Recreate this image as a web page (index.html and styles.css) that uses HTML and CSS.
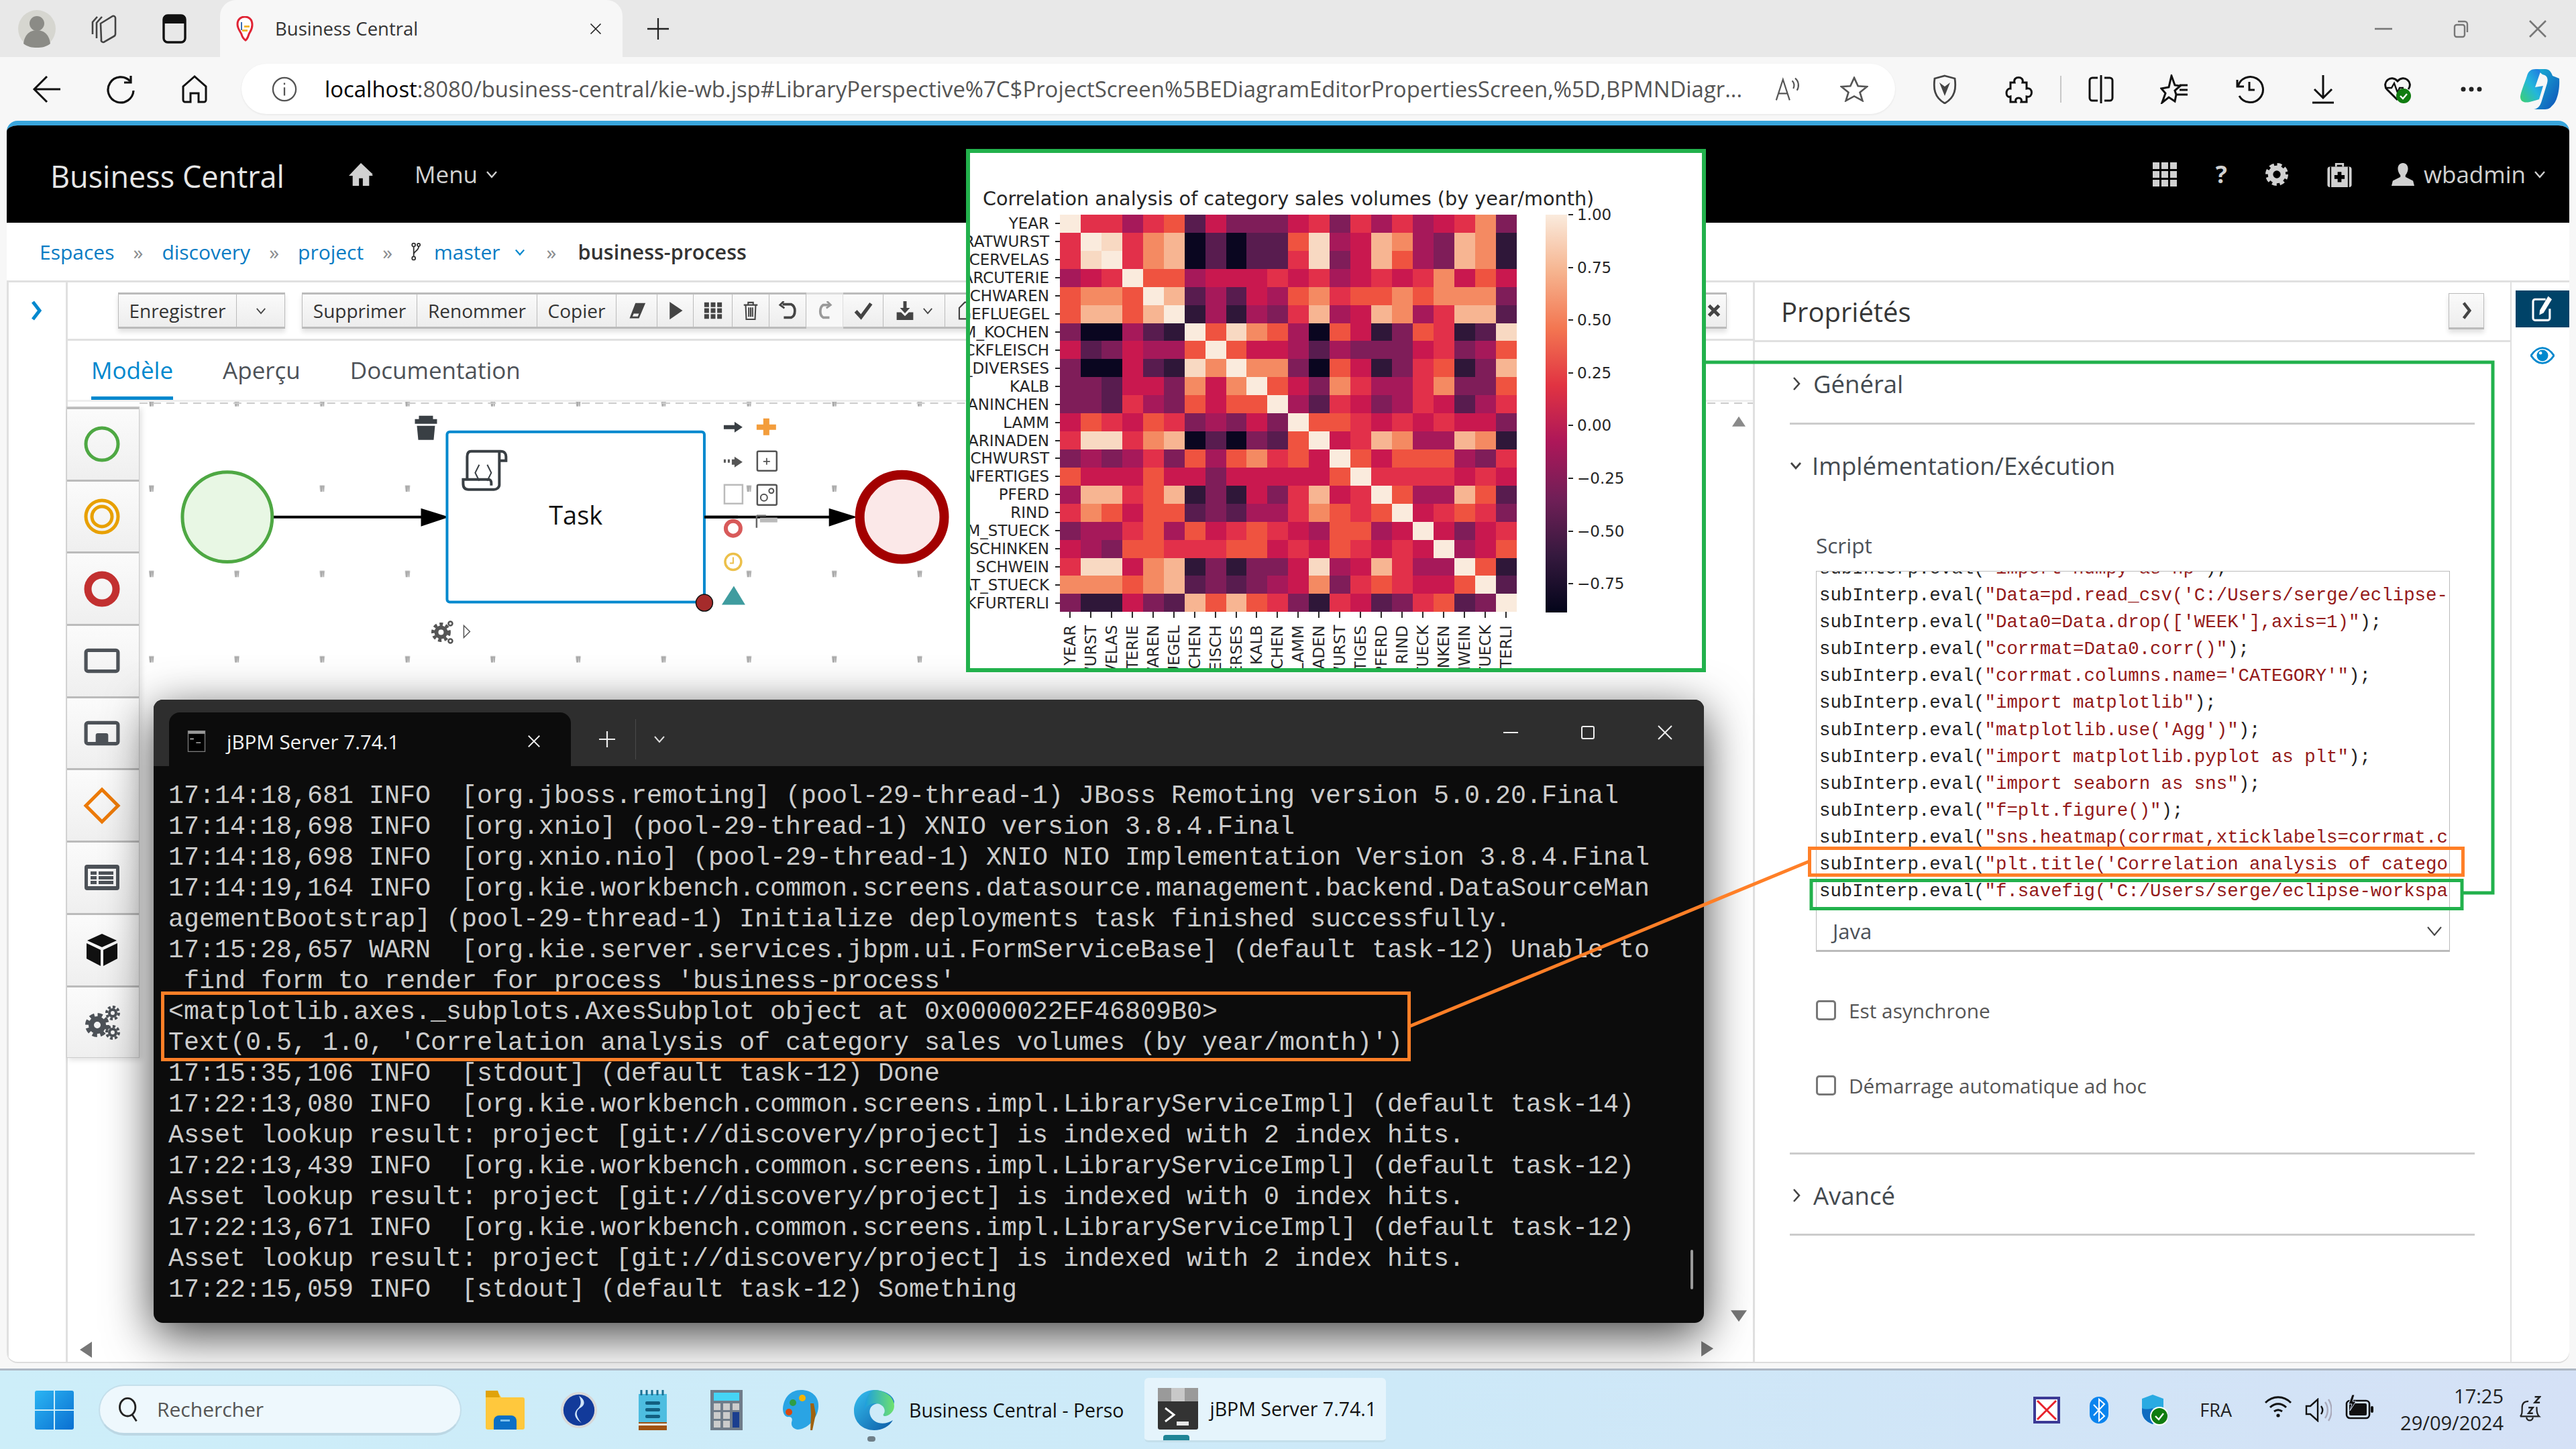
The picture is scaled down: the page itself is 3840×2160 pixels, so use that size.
FILE: index.html
```html
<!DOCTYPE html>
<html lang="fr">
<head>
  <meta charset="UTF-8">
  <title>Business Central</title>
  <link rel="stylesheet" href="styles.css">
</head>
<body>
<div class="screen">

  <!-- Browser tabs -->
  <div class="tabstrip">
    <svg class="profile" viewBox="0 0 56 56"><circle cx="28" cy="28" r="28" fill="#d6d6d0"/><circle cx="28" cy="20" r="11" fill="#8b8b86"/><path d="M8 50c2-16 12-20 20-20s18 4 20 20c-6 5-13 6-20 6s-14-1-20-6z" fill="#8b8b86"/></svg>
    <svg class="strip-icon" viewBox="0 0 40 44" fill="none" stroke="#444" stroke-width="2.6"><path d="M3 30V12l7-8M9 36V13l8-9"/><path d="M15 14l18-11a3 3 0 0 1 4 3v24a4 4 0 0 1-2 3L21 41a3 3 0 0 1-5-3z"/></svg>
    <svg class="strip-icon" viewBox="0 0 40 44"><rect x="4" y="2" width="32" height="40" rx="6" fill="none" stroke="#111" stroke-width="3.4"/><path d="M4 8a6 6 0 0 1 6-6h20a6 6 0 0 1 6 6v6H4z" fill="#111"/></svg>
    <div class="tab-active">
      <svg class="favicon" viewBox="0 0 30 38"><path d="M4 12C4 4 10 1 15 1s11 3 11 12c0 7-3 10-5 14-1 3-2 7-5 9-3-2-5-5-6-9-2-5-6-8-6-15z" fill="#fff" stroke="#e02434" stroke-width="3"/><rect x="14" y="14" width="8" height="3" fill="#f2b632"/><rect x="11" y="20" width="8" height="3" fill="#f2b632"/><rect x="9" y="9" width="2" height="12" fill="#3b6fb5"/></svg>
      <span class="tab-title">Business Central</span>
      <svg class="tab-x" viewBox="0 0 24 24" stroke="#222" stroke-width="2"><path d="M3 3l18 18M21 3L3 21"/></svg>
    </div>
    <svg class="tab-plus" viewBox="0 0 36 36" stroke="#222" stroke-width="2.4"><path d="M18 1v34M1 18h34"/></svg>
    <div class="win-controls">
      <svg viewBox="0 0 30 30" stroke="#777" stroke-width="2.6"><path d="M2 15h26"/></svg>
      <svg viewBox="0 0 30 30" fill="none" stroke="#777" stroke-width="2.4"><rect x="6" y="9" width="15" height="18" rx="3"/><path d="M11 4h10a4 4 0 0 1 4 4v12"/></svg>
      <svg viewBox="0 0 30 30" stroke="#777" stroke-width="2.6"><path d="M3 3l24 24M27 3L3 27"/></svg>
    </div>
  </div>

  <!-- Browser toolbar -->
  <div class="browserbar">
    <div class="nav-btn"><svg viewBox="0 0 44 44" fill="none" stroke="#111" stroke-width="3"><path d="M42 22H3M22 3L3 22l19 19"/></svg></div>
    <div class="nav-btn"><svg viewBox="0 0 44 44" fill="none" stroke="#111" stroke-width="3.2"><path d="M36 10A19 19 0 1 0 41 24"/><path d="M37 2v10H27"/></svg></div>
    <div class="nav-btn"><svg viewBox="0 0 44 44" fill="none" stroke="#111" stroke-width="3"><path d="M22 3L5 18v20a3 3 0 0 0 3 3h8V28h12v13h8a3 3 0 0 0 3-3V18z"/></svg></div>
    <div class="address">
      <svg class="addr-info" viewBox="0 0 40 40" fill="none" stroke="#555" stroke-width="2.4"><circle cx="20" cy="20" r="18"/><path d="M20 17v13M20 10v3"/></svg>
      <span class="url"><b>localhost</b>:8080/business-central/kie-wb.jsp#LibraryPerspective%7C$ProjectScreen%5BEDiagramEditorPropertiesScreen,%5D,BPMNDiagr...</span>
      <svg class="addr-read" viewBox="0 0 44 40" fill="none" stroke="#555" stroke-width="2.4"><path d="M2 38L13 4l11 34M6 27h14M28 6c4 3 4 9 2 13M33 2c6 5 7 13 3 20"/></svg>
      <svg class="addr-star" viewBox="0 0 44 40" fill="none" stroke="#555" stroke-width="2.8"><path d="M22 2l6 13 14 1-11 9 4 13-13-7-13 7 4-13L2 16l14-1z"/></svg>
    </div>
    <div class="ext-icons">
      <svg viewBox="0 0 44 44" fill="none" stroke="#444" stroke-width="2.8"><path d="M22 2l15 4c2 14 1 28-15 37C6 34 5 20 7 6z"/><path d="M14 12l8 20 8-20-8 6z" fill="#444" stroke="none"/></svg>
      <svg viewBox="0 0 44 44" fill="none" stroke="#111" stroke-width="3"><path d="M10 12h6c-3-10 15-10 12 0h6v9c10-3 10 15 0 12v8h-8c3-8-11-8-8 0h-8v-8c-8 3-8-13 0-12z"/></svg>
      <i class="ext-sep"></i>
      <svg viewBox="0 0 44 44" fill="none" stroke="#111" stroke-width="3"><path d="M17 5H9a4 4 0 0 0-4 4v26a4 4 0 0 0 4 4h8M27 5h8a4 4 0 0 1 4 4v26a4 4 0 0 1-4 4h-8M22 1v42"/></svg>
      <svg viewBox="0 0 44 44" fill="none" stroke="#111" stroke-width="3"><path d="M17 2l5 14 8 1-8 7 2 6-2 10-9-6-10 8 5-14-6-7 11-2z"/><path d="M29 20h12M29 27h12M25 34h16" transform="translate(0 -4)"/></svg>
      <svg viewBox="0 0 44 44" fill="none" stroke="#111" stroke-width="3"><path d="M4 8v10h10"/><path d="M5 18a19 19 0 1 1 2 14"/><path d="M22 11v12h8"/></svg>
      <svg viewBox="0 0 44 44" fill="none" stroke="#111" stroke-width="3"><path d="M22 1v34M9 22l13 13 13-13M6 42h32"/></svg>
      <svg viewBox="0 0 44 44"><path d="M22 38L6 22C-2 12 12-1 22 10 32-1 46 12 38 22" fill="none" stroke="#111" stroke-width="3"/><path d="M3 20h10l4-7 5 14 3-7h6" fill="none" stroke="#111" stroke-width="2.4"/><circle cx="31" cy="32" r="11" fill="#107c10"/><path d="M26 32l4 4 6-7" fill="none" stroke="#fff" stroke-width="2.4"/></svg>
      <svg viewBox="0 0 44 44" fill="#222"><circle cx="10" cy="22" r="3.5"/><circle cx="22" cy="22" r="3.5"/><circle cx="34" cy="22" r="3.5"/></svg>
      <svg class="copilot" viewBox="0 0 60 62"><defs><linearGradient id="cpA" x1="0" y1="0" x2="1" y2="1"><stop offset="0" stop-color="#1bb6d6"/><stop offset="1" stop-color="#0f4fb8"/></linearGradient><linearGradient id="cpB" x1="0" y1="1" x2="1" y2="0"><stop offset="0" stop-color="#3fd06f"/><stop offset=".5" stop-color="#23b6dc"/><stop offset="1" stop-color="#1f6fe0"/></linearGradient></defs><path d="M24 1h14c6 0 9 4 11 10l10 4c1 14-2 34-11 41-3 4-6 5-12 5H21c7-1 10-6 12-13l8-26c2-8-1-12-7-13z" fill="url(#cpA)"/><path d="M24 1c-7 0-11 3-13 10C6 26 2 34 1 42c0 7 5 10 14 8 5-1 10-3 14-4l6-20-12 2 8-23c0-2-2-4-7-4z" fill="url(#cpB)"/></svg>
    </div>
  </div>

  <!-- Business Central -->
  <div class="app">
    <header class="topnav">
      <span class="brand">Business Central</span>
      <svg class="nav-home" viewBox="0 0 38 36" fill="#d1d1d1"><path d="M19 0l14 18h5L19 0zM19 0L0 20h6v16h10V24h6v12h10V20h6z"/></svg>
      <span class="nav-menu">Menu<svg class="caret" viewBox="0 0 18 12" fill="none" stroke="currentColor" stroke-width="2.4"><path d="M2 2l7 8 7-8"/></svg></span>
      <div class="nav-right">
        <svg class="ni-grid" viewBox="0 0 36 36" fill="#d1d1d1"><rect width="10" height="10"/><rect x="13" width="10" height="10"/><rect x="26" width="10" height="10"/><rect y="13" width="10" height="10"/><rect x="13" y="13" width="10" height="10"/><rect x="26" y="13" width="10" height="10"/><rect y="26" width="10" height="10"/><rect x="13" y="26" width="10" height="10"/><rect x="26" y="26" width="10" height="10"/></svg>
        <span class="ni-help">?</span>
        <svg class="ni-gear" viewBox="0 0 36 36" fill="none" stroke="#d1d1d1"><circle cx="18" cy="18" r="10" stroke-width="8"/><circle cx="18" cy="18" r="15" stroke-width="6" stroke-dasharray="7 4.8"/></svg>
        <svg class="ni-case" viewBox="0 0 38 40" fill="#d1d1d1"><path d="M12 8V2h14v6h-3V5h-8v3z"/><rect y="8" width="38" height="32" rx="4"/><path d="M5 8v32M33 8v32" stroke="#000" stroke-width="2"/><path d="M16 16h6v5h5v6h-5v5h-6v-5h-5v-6h5z" fill="#000"/></svg>
        <svg class="ni-user" viewBox="0 0 36 36" fill="#d1d1d1"><path d="M18 0c5 0 8 4 8 9 0 4-2 8-4 10v3l12 6 2 8H0l2-8 12-6v-3c-2-2-4-6-4-10 0-5 3-9 8-9z"/></svg>
        <span class="nav-user">wbadmin<svg class="caret" viewBox="0 0 18 12" fill="none" stroke="currentColor" stroke-width="2.4"><path d="M2 2l7 8 7-8"/></svg></span>
      </div>
    </header>

    <nav class="crumbs">
      <a>Espaces</a><span class="sep">»</span>
      <a>discovery</a><span class="sep">»</span>
      <a>project</a><span class="sep">»</span>
      <svg class="branch" viewBox="0 0 16 34" fill="none" stroke="#333" stroke-width="2.2"><circle cx="4" cy="5" r="3"/><circle cx="13" cy="5" r="2.6"/><circle cx="4" cy="29" r="3"/><path d="M4 8v18M13 8c0 8-9 8-9 14"/></svg>
      <a class="crumb-branch">master</a>
      <svg class="caret crumb-caret" viewBox="0 0 18 12" fill="none" stroke="#0088ce" stroke-width="2.4"><path d="M2 2l7 8 7-8"/></svg>
      <span class="sep">»</span>
      <strong>business-process</strong>
    </nav>

    <div class="workbench">
      <aside class="rail">
        <svg viewBox="0 0 16 30" fill="none" stroke="#0088ce" stroke-width="5"><path d="M3 2l10 13L3 28"/></svg>
      </aside>

      <main class="editor">
        <div class="toolbar">
          <div class="btn-group">
            <button class="btn w-save">Enregistrer</button>
            <button class="btn w-drop"><svg class="caret" viewBox="0 0 18 12" fill="none" stroke="#444" stroke-width="2"><path d="M2 2l7 8 7-8"/></svg></button>
          </div>
          <div class="btn-group">
            <button class="btn w-del">Supprimer</button>
            <button class="btn w-ren">Renommer</button>
            <button class="btn w-copy">Copier</button>
            <button class="btn w-ico"><svg viewBox="0 0 32 28" fill="#444"><path d="M14 1h17l-11 26H4l3-8h4l-2 5h9l2-5H7z"/></svg></button>
            <button class="btn w-play"><svg viewBox="0 0 32 32" fill="#444"><path d="M6 1l22 15L6 31z"/></svg></button>
            <button class="btn w-ico2"><svg viewBox="0 0 32 28" fill="#444"><rect x="1" width="8" height="8"/><rect x="12" width="8" height="8"/><rect x="23" width="8" height="8"/><rect x="1" y="10" width="8" height="8"/><rect x="12" y="10" width="8" height="8"/><rect x="23" y="10" width="8" height="8"/><rect x="1" y="20" width="8" height="8"/><rect x="12" y="20" width="8" height="8"/><rect x="23" y="20" width="8" height="8"/></svg></button>
            <button class="btn w-ico3"><svg viewBox="0 0 24 30" fill="none" stroke="#444" stroke-width="2.2"><path d="M1 6h22M8 6V2h8v4M4 6l1 23h14l1-23M9 10v15M12 10v15M15 10v15"/></svg></button>
            <button class="btn w-ico3"><svg viewBox="0 0 28 30" fill="none" stroke="#444" stroke-width="4"><path d="M6 5l14 0a8 11 0 0 1 0 21H8"/><path d="M8 0L2 6l7 5" stroke-width="3"/></svg></button>
            <button class="btn w-ico3 is-off"><svg viewBox="0 0 28 30" fill="none" stroke="#999" stroke-width="4"><path d="M22 6H12a8 11 0 0 0 0 20h10"/><path d="M18 0l6 6-7 5" stroke-width="3"/></svg></button>
            <button class="btn w-check"><svg viewBox="0 0 32 28" fill="none" stroke="#444" stroke-width="6"><path d="M3 15l9 10L29 2"/></svg></button>
            <button class="btn w-deploy"><svg viewBox="0 0 30 34" fill="#444"><path d="M12 0h6v12h6l-9 10-9-10h6z"/><path d="M0 20h8l7 7 7-7h8v14H0z"/></svg><svg class="caret" viewBox="0 0 18 12" fill="none" stroke="#444" stroke-width="2"><path d="M2 2l7 8 7-8"/></svg></button>
            <button class="btn w-doc"><svg viewBox="0 0 26 34" fill="none" stroke="#444" stroke-width="2.6"><path d="M2 12L12 2h12v30H2z"/></svg></button>
          </div>
          <button class="btn w-close"><svg viewBox="0 0 24 24" stroke="#444" stroke-width="6"><path d="M3 3l18 18M21 3L3 21"/></svg></button>
        </div>

        <div class="tabs">
          <span class="tab is-active">Modèle</span>
          <span class="tab">Aperçu</span>
          <span class="tab">Documentation</span>
        </div>

        <div class="canvas-wrap">
          <div class="palette">
            <div class="pal-item"><svg viewBox="0 0 56 56" fill="none" stroke="#4ea843" stroke-width="5"><circle cx="28" cy="28" r="24"/></svg></div>
            <div class="pal-item"><svg viewBox="0 0 56 56" fill="none" stroke="#e8a000" stroke-width="5"><circle cx="28" cy="28" r="24"/><circle cx="28" cy="28" r="15"/></svg></div>
            <div class="pal-item"><svg viewBox="0 0 56 56" fill="none" stroke="#c23030" stroke-width="11"><circle cx="28" cy="28" r="21"/></svg></div>
            <div class="pal-item"><svg class="pal-wide" viewBox="0 0 52 36" fill="none" stroke="#4d5258" stroke-width="5"><rect x="3" y="3" width="46" height="30" rx="3"/></svg></div>
            <div class="pal-item"><svg class="pal-wide" viewBox="0 0 52 36"><rect x="3" y="3" width="46" height="30" rx="3" fill="none" stroke="#4d5258" stroke-width="5"/><rect x="17" y="18" width="18" height="15" rx="3" fill="#4d5258"/></svg></div>
            <div class="pal-item"><svg viewBox="0 0 56 56" fill="none" stroke="#ec7a08" stroke-width="5"><path d="M28 4l24 24-24 24L4 28z"/></svg></div>
            <div class="pal-item"><svg class="pal-wide" viewBox="0 0 52 38" fill="#4d5258"><path d="M4 0h44a4 4 0 0 1 4 4v30a4 4 0 0 1-4 4H4a4 4 0 0 1-4-4V4a4 4 0 0 1 4-4zm1 6v26h42V6z" fill-rule="evenodd"/><rect x="9" y="10" width="9" height="5"/><rect x="21" y="10" width="22" height="5"/><rect x="9" y="17" width="9" height="5"/><rect x="21" y="17" width="22" height="5"/><rect x="9" y="24" width="9" height="5"/><rect x="21" y="24" width="22" height="5"/></svg></div>
            <div class="pal-item"><svg viewBox="0 0 56 56" fill="#111"><path d="M28 4l22 10-22 10L6 14z"/><path d="M5 18l21 10v24L5 41z"/><path d="M51 18L30 28v24l21-11z"/></svg></div>
            <div class="pal-item"><svg viewBox="0 0 56 56" fill="none" stroke="#4d5258"><circle cx="21" cy="32" r="9" stroke-width="8"/><circle cx="21" cy="32" r="15" stroke-width="6" stroke-dasharray="7 4.8"/><circle cx="44" cy="14" r="5" stroke-width="4"/><circle cx="44" cy="14" r="9" stroke-width="4" stroke-dasharray="4 3"/><circle cx="44" cy="43" r="5" stroke-width="4"/><circle cx="44" cy="43" r="9" stroke-width="4" stroke-dasharray="4 3"/></svg></div>
          </div>

          <svg class="diagram" viewBox="207 599 2408 1431">
            <defs>
              <pattern id="grid" x="226" y="600" width="127.4" height="127.4" patternUnits="userSpaceOnUse">
                <path d="M0 0h5l-1 9h-3z" fill="#aaa" transform="translate(-2.5 -4)"/>
                <path d="M125 0h5l-1 9h-3z" fill="#aaa" transform="translate(-2.5 -4)"/>
                <path d="M0 127h5l-1 9h-3z" fill="#aaa" transform="translate(-2.5 -4)"/>
                <path d="M125 127h5l-1 9h-3z" fill="#aaa" transform="translate(-2.5 -4)"/>
              </pattern>
            </defs>
            <rect x="207" y="596" width="2408" height="440" fill="url(#grid)"/>
            <path d="M207 600H2615" stroke="#ccc" stroke-width="2" stroke-dasharray="12 8"/>

            <line x1="406" y1="770" x2="630" y2="770" stroke="#000" stroke-width="4"/>
            <path d="M627 757l42 13-42 14z" fill="#000"/>
            <line x1="1050" y1="770" x2="1240" y2="770" stroke="#000" stroke-width="4"/>
            <path d="M1236 757l42 13-42 14z" fill="#000"/>

            <circle cx="338" cy="770" r="67" fill="#e8f7e4" stroke="#4ea843" stroke-width="5"/>
            <rect x="666" y="643" width="384" height="254" rx="4" fill="#fff" stroke="#0088ce" stroke-width="4"/>
            <text x="858" y="781" class="task-label">Task</text>
            <circle cx="1345" cy="770" r="63" fill="#fbe8e8" stroke="#a30000" stroke-width="14"/>
            <line x1="1050" y1="770" x2="1100" y2="770" stroke="#000" stroke-width="4"/>

            <g fill="none" stroke="#393f44" stroke-width="4">
              <path d="M702 672h44c6 0 8 4 8 8v6h-10M702 672c-4 0-6 3-6 8v34M744 674v48c0 4-4 7-8 7h-38c-6 0-8-4-8-9v-6h38c2 0 4 2 4 5v4"/>
              <path d="M714 692l-6 12 6 12M726 692l6 12-6 12" stroke-width="2"/>
            </g>
            <path d="M624 619h21v5h6v7h-33v-7h6zM621 634h27l-2 21h-23z" fill="#393f44"/>

            <path d="M1079 633h16v-5l12 8-12 8v-5h-16z" fill="#393f44"/>
            <path d="M1138 623h9v9h10v8h-10v8h-9v-8h-10v-8h10z" fill="#f39d3c"/>
            <path d="M1079 684h3v5h-3zM1085 684h3v5h-3zM1091 684h4v-4l12 8-12 8v-4h-4z" fill="#555"/>
            <rect x="1129" y="672" width="29" height="29" rx="2" fill="#fff" stroke="#555" stroke-width="2.5"/>
            <path d="M1143 682v10M1138 687h10" stroke="#555" stroke-width="1.8"/>
            <rect x="1080" y="722" width="27" height="28" fill="#fff" stroke="#bbb" stroke-width="2.5"/>
            <rect x="1129" y="722" width="29" height="30" rx="2" fill="#fff" stroke="#555" stroke-width="2.5"/>
            <circle cx="1139" cy="741" r="5" fill="none" stroke="#555" stroke-width="2"/><circle cx="1150" cy="731" r="3.5" fill="none" stroke="#555" stroke-width="2"/>
            <path d="M1128 786v-18M1128 768h14" stroke="#666" stroke-width="2.5" fill="none"/>
            <rect x="1133" y="771" width="26" height="7" fill="#bbb"/>
            <circle cx="1093" cy="787" r="11" fill="#fff" stroke="#d85a5a" stroke-width="6"/>
            <circle cx="1093" cy="837" r="12" fill="#fff" stroke="#ecc04a" stroke-width="3.5"/>
            <path d="M1093 830v9h-5" fill="none" stroke="#ecc04a" stroke-width="2"/>
            <path d="M1094 873l17 28h-35z" fill="#3f9c9f"/>
            <circle cx="1050" cy="898" r="12.5" fill="#a52b2b" stroke="#111" stroke-width="1.5"/>

            <g fill="none" stroke="#555">
              <circle cx="657" cy="942" r="7" stroke-width="6"/><circle cx="657" cy="942" r="12" stroke-width="5" stroke-dasharray="5 4"/>
              <circle cx="671" cy="929" r="3" stroke-width="2.5"/><circle cx="671" cy="955" r="3" stroke-width="2.5"/>
            </g>
            <path d="M691 932l9 9-9 9z" fill="#fff" stroke="#555" stroke-width="1.5"/>

            <path d="M2594 620l10 15h-20z" fill="#8a8a8a"/>
            <path d="M2582 1954h24l-12 17z" fill="#777"/>
            <path d="M2538 2000l18 11-18 12z" fill="#777"/>
          </svg>
          <svg class="scroll-left" viewBox="0 0 18 24"><path d="M18 0v24L0 12z" fill="#777"/></svg>
        </div>
      </main>

      <section class="props">
        <div class="props-head">
          <h2>Propriétés</h2>
          <button class="props-toggle"><svg viewBox="0 0 16 30" fill="none" stroke="#444" stroke-width="5"><path d="M3 2l10 13L3 28"/></svg></button>
        </div>
        <div class="props-body">
          <div class="acc acc-general">
            <svg class="chev" viewBox="0 0 12 22" fill="none" stroke="#444" stroke-width="2.6"><path d="M2 2l8 9-8 9"/></svg>Général
          </div>
          <div class="acc acc-impl">
            <svg class="chev-down" viewBox="0 0 18 12" fill="none" stroke="#444" stroke-width="2.8"><path d="M2 2l7 8 7-8"/></svg>Implémentation/Exécution
          </div>
          <div class="script-form">
            <label class="form-label">Script</label>
            <div class="code-editor">
<div class="code"><div class="code-line">subInterp.eval(<em>"import numpy as np"</em>);</div>
<div class="code-line">subInterp.eval(<em>"Data=pd.read_csv('C:/Users/serge/eclipse-</em></div>
<div class="code-line">subInterp.eval(<em>"Data0=Data.drop(['WEEK'],axis=1)"</em>);</div>
<div class="code-line">subInterp.eval(<em>"corrmat=Data0.corr()"</em>);</div>
<div class="code-line">subInterp.eval(<em>"corrmat.columns.name='CATEGORY'"</em>);</div>
<div class="code-line">subInterp.eval(<em>"import matplotlib"</em>);</div>
<div class="code-line">subInterp.eval(<em>"matplotlib.use('Agg')"</em>);</div>
<div class="code-line">subInterp.eval(<em>"import matplotlib.pyplot as plt"</em>);</div>
<div class="code-line">subInterp.eval(<em>"import seaborn as sns"</em>);</div>
<div class="code-line">subInterp.eval(<em>"f=plt.figure()"</em>);</div>
<div class="code-line">subInterp.eval(<em>"sns.heatmap(corrmat,xticklabels=corrmat.c</em></div>
<div class="code-line">subInterp.eval(<em>"plt.title('Correlation analysis of catego</em></div>
<div class="code-line">subInterp.eval(<em>"f.savefig('C:/Users/serge/eclipse-workspa</em></div></div>
              <div class="lang-select">Java<svg viewBox="0 0 22 14" fill="none" stroke="#444" stroke-width="2"><path d="M1 1l10 12L21 1"/></svg></div>
            </div>
            <label class="check"><i></i>Est asynchrone</label>
            <label class="check"><i></i>Démarrage automatique ad hoc</label>
          </div>
          <div class="acc acc-adv">
            <svg class="chev" viewBox="0 0 12 22" fill="none" stroke="#444" stroke-width="2.6"><path d="M2 2l8 9-8 9"/></svg>Avancé
          </div>
        </div>
      </section>

      <aside class="dock">
        <button class="dock-btn"><svg viewBox="0 0 40 54" fill="none" stroke="#fff" stroke-width="4"><path d="M26 8H6a4 4 0 0 0-4 4v32a4 4 0 0 0 4 4h24a4 4 0 0 0 4-4V26"/><path d="M31 2l7 6-16 26-8 4 1-9z" fill="#fff" stroke="none"/></svg></button>
        <svg class="dock-eye" viewBox="0 0 38 26" fill="none" stroke="#0088ce" stroke-width="3"><path d="M1 13C7 4 13 1 19 1s12 3 18 12c-6 9-12 12-18 12S7 22 1 13z"/><circle cx="19" cy="13" r="9" fill="#0088ce" stroke="none"/><circle cx="16" cy="9" r="2.4" fill="#fff" stroke="none"/></svg>
      </aside>
    </div>
  </div>

  <!-- Windows taskbar -->
  <div class="taskbar">
    <svg class="start" viewBox="0 0 58 58"><defs><linearGradient id="winG" x1="0" y1="0" x2="1" y2="1"><stop offset="0" stop-color="#2bb5f3"/><stop offset="1" stop-color="#0a6fd1"/></linearGradient></defs><path d="M0 3a3 3 0 0 1 3-3h25v28H0zM30 0h25a3 3 0 0 1 3 3v25H30zM0 30h28v28H3a3 3 0 0 1-3-3zM30 30h28v25a3 3 0 0 1-3 3H30z" fill="url(#winG)"/></svg>
    <div class="search"><svg viewBox="0 0 36 44" fill="none" stroke="#222" stroke-width="3.4"><ellipse cx="17" cy="18" rx="14" ry="16"/><path d="M25 31l8 12"/></svg>Rechercher</div>
    <svg class="app-icon a-folder" viewBox="0 0 58 60"><path d="M0 4a3 3 0 0 1 3-3h14l6 10h32a3 3 0 0 1 3 3v42a3 3 0 0 1-3 3H3a3 3 0 0 1-3-3z" fill="#ffc83d"/><path d="M0 1h18l3 10H0z" fill="#e0a30a"/><path d="M12 46a8 8 0 0 1 8-8h18a8 8 0 0 1 8 8v13H12z" fill="#0b6fc6"/><rect x="22" y="44" width="14" height="3" fill="#7cc0ee"/></svg>
    <svg class="app-icon a-disc" viewBox="0 0 58 60"><circle cx="29" cy="30" r="28" fill="#d8d8d8"/><circle cx="29" cy="30" r="24" fill="#123a9a"/><path d="M29 8c10 6 10 14 3 18s-10 10 1 24C21 42 21 34 27 28s6-12 2-20z" fill="#cfe3f7"/></svg>
    <svg class="app-icon a-notes" viewBox="0 0 44 60"><rect x="1" y="6" width="42" height="48" fill="#4dbde0"/><rect x="1" y="48" width="42" height="12" fill="#a05311"/><rect x="1" y="50" width="42" height="3" fill="#e8e8e8"/><path d="M5 0v8M13 0v8M21 0v8M29 0v8M37 0v8" stroke="#1a6f93" stroke-width="3"/><rect x="11" y="17" width="22" height="5" rx="2" fill="#125f80"/><rect x="11" y="27" width="22" height="5" rx="2" fill="#125f80"/><rect x="11" y="37" width="22" height="5" rx="2" fill="#125f80"/></svg>
    <svg class="app-icon a-calc" viewBox="0 0 48 60"><rect width="48" height="60" fill="#6f7c8a"/><rect x="5" y="4" width="38" height="12" fill="#45d4f5"/><rect x="5" y="20" width="10" height="10" fill="#ccc"/><rect x="19" y="20" width="10" height="10" fill="#ccc"/><rect x="33" y="20" width="10" height="10" fill="#ccc"/><rect x="5" y="33" width="10" height="10" fill="#ccc"/><rect x="19" y="33" width="10" height="10" fill="#ccc"/><rect x="5" y="46" width="10" height="10" fill="#ccc"/><rect x="19" y="46" width="10" height="10" fill="#ccc"/><rect x="33" y="33" width="10" height="23" fill="#1b3f8f"/></svg>
    <svg class="app-icon a-paint" viewBox="0 0 58 60"><path d="M28 0C12 0 2 12 1 28c0 8 4 13 9 12 4 0 6 3 4 8-1 5 2 10 9 11 13 0 30-15 31-34C55 10 44 0 28 0z" fill="#2aa4e4"/><circle cx="30" cy="12" r="5" fill="#f4b400"/><circle cx="16" cy="19" r="5" fill="#2f9e44"/><circle cx="10" cy="33" r="5" fill="#d9480f"/><path d="M42 20l5 0 3 16-5 24h-3l1-24z" fill="#a0620f"/></svg>
    <div class="edge-wrap">
      <svg class="app-icon a-edge" viewBox="0 0 60 60"><defs><linearGradient id="edgeA" x1="0" y1="0" x2="1" y2="1"><stop offset="0" stop-color="#35c1f1"/><stop offset="1" stop-color="#0c59a4"/></linearGradient><linearGradient id="edgeB" x1="0" y1="0" x2="1" y2="0"><stop offset="0" stop-color="#1b9de2"/><stop offset="1" stop-color="#6fe26b"/></linearGradient></defs><path d="M30 0C13 0 0 14 0 31c0 17 13 29 30 29 12 0 23-6 28-15-12 8-30 6-34-8-3-12 6-17 14-17 7 0 12 4 12 9 4-2 10-6 10-12C58 7 44 0 30 0z" fill="url(#edgeA)"/><path d="M30 0C44 0 60 9 60 24c0 9-9 15-14 15-2 0-3-1-2-3 3-3 3-11-6-15-9-3-20 1-23 10C17 12 22 2 30 0z" fill="url(#edgeB)"/></svg>
      <i class="edge-dot"></i>
    </div>
    <span class="task-label-text t-edge">Business Central - Perso</span>
    <div class="task-active">
      <svg viewBox="0 0 60 62"><rect width="60" height="62" rx="3" fill="#333"/><rect width="60" height="20" fill="#9a9a9a"/><rect x="20" width="20" height="20" fill="#c8c8c8"/><path d="M11 30l13 10-13 10" fill="none" stroke="#fff" stroke-width="3"/><rect x="28" y="50" width="18" height="6" fill="#e6e6e6"/></svg>
      <span class="task-label-text">jBPM Server 7.74.1</span>
      <i class="task-underline"></i>
    </div>
    <div class="tray">
      <svg class="t-x" viewBox="0 0 40 40"><rect x="2" y="2" width="36" height="36" fill="#fff" stroke="#3c3a96" stroke-width="4"/><path d="M6 6l28 28M34 6L6 34" stroke="#e8212b" stroke-width="3"/></svg>
      <svg class="t-bt" viewBox="0 0 28 40"><rect width="28" height="40" rx="14" fill="#0a84ee"/><path d="M6 12l16 17-8 7V4l8 7L6 28" fill="none" stroke="#fff" stroke-width="2"/></svg>
      <svg class="t-shield" viewBox="0 0 38 46"><path d="M16 0l16 6v18c0 10-6 16-16 20C5 40 0 33 0 24V6z" fill="#2aaae2"/><path d="M0 20c3 2 10 2 16 0v24C5 40 0 33 0 24z" fill="#0f6bc0"/><circle cx="26" cy="32" r="13" fill="#107c10" stroke="#fff" stroke-width="2"/><path d="M20 32l5 5 7-9" fill="none" stroke="#fff" stroke-width="2.4"/></svg>
      <span class="t-lang">FRA</span>
      <svg class="t-wifi" viewBox="0 0 40 32" fill="none" stroke="#111" stroke-width="3"><path d="M1 10c11-11 27-11 38 0M8 17c7-7 17-7 24 0M14 23c4-3 8-3 12 0"/><circle cx="20" cy="29" r="2.6" fill="#111" stroke="none"/></svg>
      <svg class="t-sound" viewBox="0 0 40 36" fill="none" stroke="#111" stroke-width="2.4"><path d="M2 12h6l11-10v32L8 24H2zM24 12c3 4 3 8 0 12"/><path d="M30 6c5 7 5 17 0 24M35 2c6 9 6 23 0 32" stroke="#aab"/></svg>
      <svg class="t-batt" viewBox="0 0 42 38"><rect x="2" y="9" width="34" height="26" rx="5" fill="none" stroke="#111" stroke-width="2.6"/><rect x="6" y="13" width="26" height="18" rx="2" fill="#111"/><rect x="38" y="17" width="4" height="10" rx="2" fill="#111"/><path d="M10 0l-5 14h5l-3 10 9-14h-5l3-10z" fill="#111" stroke="#d3e1f6" stroke-width="1"/></svg>
      <div class="clock"><span>17:25</span><span>29/09/2024</span></div>
      <svg class="t-bell" viewBox="0 0 36 44" fill="none" stroke="#222" stroke-width="2.4"><path d="M3 32c3-3 3-6 3-14C6 11 10 8 16 8M29 17c0 9 1 12 4 15H3"/><path d="M13 33c0 7 10 7 10 0"/><path d="M16 18h7l-7 9h7M26 1h8l-8 9h8" stroke-width="2.6"/></svg>
    </div>
  </div>

  <!-- Pasted heatmap -->
  <figure class="chart">
    <figcaption class="chart-title">Correlation analysis of category sales volumes (by year/month)</figcaption>
    <div class="plot">
      <div class="ylabels" id="ylabels"></div>
      <div class="heat-col">
        <div class="heatmap" id="heatmap"></div>
        <div class="xlabels" id="xlabels"></div>
      </div>
      <div class="cbar"></div>
      <div class="cbar-ticks">
        <span>1.00</span><span>0.75</span><span>0.50</span><span>0.25</span><span>0.00</span><span>−0.25</span><span>−0.50</span><span>−0.75</span>
      </div>
    </div>
  </figure>

  <!-- Terminal -->
  <section class="terminal">
    <div class="term-bar">
      <div class="term-tab">
        <svg viewBox="0 0 38 46"><rect x="1" y="1" width="36" height="44" fill="#000" stroke="#777" stroke-width="2"/><rect x="1" y="1" width="36" height="6" fill="#999"/><path d="M5 18h8M18 26h10" stroke="#ccc" stroke-width="2"/></svg>
        <span>jBPM Server 7.74.1</span>
        <svg class="term-x" viewBox="0 0 24 24" stroke="#eee" stroke-width="2"><path d="M3 3l18 18M21 3L3 21"/></svg>
      </div>
      <svg class="term-plus" viewBox="0 0 26 26" stroke="#eee" stroke-width="2.2"><path d="M13 1v24M1 13h24"/></svg>
      <i class="term-sep"></i>
      <svg class="term-drop" viewBox="0 0 18 12" fill="none" stroke="#ddd" stroke-width="2"><path d="M2 2l7 8 7-8"/></svg>
      <div class="term-win">
        <svg viewBox="0 0 24 24" stroke="#eee" stroke-width="2"><path d="M1 12h22"/></svg>
        <svg viewBox="0 0 24 24" fill="none" stroke="#eee" stroke-width="2"><rect x="3" y="3" width="18" height="18" rx="2"/></svg>
        <svg viewBox="0 0 24 24" stroke="#eee" stroke-width="2"><path d="M2 2l20 20M22 2L2 22"/></svg>
      </div>
    </div>
    <pre class="term-text">17:14:18,681 INFO  [org.jboss.remoting] (pool-29-thread-1) JBoss Remoting version 5.0.20.Final
17:14:18,698 INFO  [org.xnio] (pool-29-thread-1) XNIO version 3.8.4.Final
17:14:18,698 INFO  [org.xnio.nio] (pool-29-thread-1) XNIO NIO Implementation Version 3.8.4.Final
17:14:19,164 INFO  [org.kie.workbench.common.screens.datasource.management.backend.DataSourceMan
agementBootstrap] (pool-29-thread-1) Initialize deployments task finished successfully.
17:15:28,657 WARN  [org.kie.server.services.jbpm.ui.FormServiceBase] (default task-12) Unable to
 find form to render for process 'business-process'
&lt;matplotlib.axes._subplots.AxesSubplot object at 0x0000022EF46809B0&gt;
Text(0.5, 1.0, 'Correlation analysis of category sales volumes (by year/month)')
17:15:35,106 INFO  [stdout] (default task-12) Done
17:22:13,080 INFO  [org.kie.workbench.common.screens.impl.LibraryServiceImpl] (default task-14)
Asset lookup result: project [git://discovery/project] is indexed with 2 index hits.
17:22:13,439 INFO  [org.kie.workbench.common.screens.impl.LibraryServiceImpl] (default task-12)
Asset lookup result: project [git://discovery/project] is indexed with 0 index hits.
17:22:13,671 INFO  [org.kie.workbench.common.screens.impl.LibraryServiceImpl] (default task-12)
Asset lookup result: project [git://discovery/project] is indexed with 2 index hits.
17:22:15,059 INFO  [stdout] (default task-12) Something</pre>
    <i class="term-scroll"></i>
  </section>

  <!-- Hand-drawn highlights on top of the screenshot -->
  <svg class="marks" viewBox="0 0 3840 2160" fill="none">
    <rect class="mark-orange" x="242.5" y="1480.5" width="1858" height="99"/>
    <rect class="mark-orange" x="2697.5" y="1264.5" width="974" height="40"/>
    <path class="mark-orange" d="M2101 1530L2697 1284"/>
    <rect class="mark-green" x="2700" y="1312.5" width="970" height="42"/>
    <path class="mark-green" d="M2543 540H3716V1331H3672"/>
  </svg>
</div>
<script src="heatmap.js"></script>
</body>
</html>
```

FILE: styles.css
```css
* {
  box-sizing: border-box;
}
html, body {
  margin: 0;
  padding: 0;
  width: 3840px;
  height: 2160px;
  overflow: hidden;
}
body {
  font-family: 'Open Sans', sans-serif;
  color: #222;
  background: #f7f7f7;
}
svg {
  display: block;
  flex: none;
}
button {
  font: inherit;
  color: inherit;
}
.screen {
  position: relative;
  width: 3840px;
  height: 2160px;
  display: flex;
  flex-direction: column;
}

/* browser tabs */
.tabstrip {
  height: 85px;
  background: #e8e8e8;
  display: flex;
  align-items: center;
  flex: none;
}
.profile {
  width: 56px;
  height: 56px;
  margin-left: 27px;
}
.strip-icon {
  width: 40px;
  height: 44px;
  margin-left: 52px;
}
.strip-icon + .strip-icon {
  margin-left: 65px;
}
.tab-active {
  width: 600px;
  height: 85px;
  margin-left: 48px;
  background: #f7f7f7;
  border-radius: 24px 24px 0 0;
  display: flex;
  align-items: center;
  padding-left: 22px;
}
.favicon {
  width: 30px;
  height: 38px;
}
.tab-title {
  margin-left: 30px;
  font-size: 27.5px;
  color: #333;
  width: 468px;
}
.tab-x {
  width: 20px;
  height: 22px;
}
.tab-plus {
  width: 34px;
  height: 36px;
  margin-left: 36px;
}
.win-controls {
  margin-left: auto;
  display: flex;
  gap: 85px;
  padding-right: 42px;
}
.win-controls svg {
  width: 30px;
  height: 30px;
}

/* browser toolbar */
.browserbar {
  height: 95px;
  background: #f7f7f7;
  display: flex;
  align-items: center;
  padding-left: 15px;
  flex: none;
}
.nav-btn {
  width: 110px;
  display: flex;
  justify-content: center;
}
.nav-btn svg {
  width: 44px;
  height: 44px;
}
.address {
  width: 2465px;
  height: 75px;
  margin-left: 15px;
  background: #fff;
  border-radius: 38px;
  display: flex;
  align-items: center;
  padding-left: 45px;
  box-shadow: 0 1px 3px rgba(0,0,0,0.08);
}
.addr-info {
  width: 38px;
  height: 38px;
}
.url {
  margin-left: 41px;
  width: 2114px;
  font-size: 32.9px;
  color: #555;
  white-space: nowrap;
  overflow: hidden;
}
.url b {
  font-weight: 400;
  color: #000;
}
.addr-read {
  width: 40px;
  height: 38px;
  margin-left: 48px;
}
.addr-star {
  width: 42px;
  height: 38px;
  margin-left: 57px;
}
.ext-icons {
  display: flex;
  align-items: center;
  margin-left: 18.5px;
}
.ext-icons svg {
  width: 44px;
  height: 44px;
  margin: 0 33.25px;
}
.ext-sep {
  width: 2px;
  height: 40px;
  margin: 0 4px 0 6px;
  background: #c8c8c8;
}
.ext-icons .copilot {
  width: 60px;
  height: 62px;
  margin: 0 0 0 16px;
}

/* application window */
.app {
  flex: 1;
  margin: 0 10px;
  border-top: 7px solid #39a5dc;
  border-radius: 16px;
  overflow: hidden;
  display: flex;
  flex-direction: column;
  background: #fff;
  box-shadow: 0 2px 0 #ddd;
}
.topnav {
  height: 145px;
  background: #000;
  color: #d1d1d1;
  display: flex;
  align-items: center;
  padding: 0 35px 0 65px;
  flex: none;
}
.brand {
  font-size: 45px;
  color: #e6e6e6;
  width: 445px;
  margin-top: 6px;
}
.nav-home {
  width: 36px;
  height: 36px;
}
.nav-menu {
  font-size: 35px;
  margin-left: 62px;
  display: flex;
  align-items: center;
  gap: 12px;
}
.caret {
  width: 18px;
  height: 12px;
}
.nav-right {
  margin-left: auto;
  display: flex;
  align-items: center;
}
.ni-grid {
  width: 36px;
  height: 36px;
}
.ni-help {
  font-weight: 700;
  font-size: 36px;
  margin-left: 58px;
}
.ni-gear {
  width: 34px;
  height: 34px;
  margin-left: 57px;
}
.ni-case {
  width: 37px;
  height: 38px;
  margin-left: 58px;
}
.ni-user {
  width: 34px;
  height: 36px;
  margin-left: 59px;
}
.nav-user {
  font-size: 35px;
  margin-left: 14px;
  display: flex;
  align-items: center;
  gap: 12px;
}

/* breadcrumb */
.crumbs {
  height: 89px;
  border-bottom: 3px solid #e0e0e0;
  padding-left: 49px;
  display: flex;
  align-items: center;
  font-size: 30px;
  flex: none;
}
.crumbs a {
  color: #0a7cc4;
}
.crumbs .sep {
  color: #8b8d8f;
  margin: 0 28px;
  font-size: 30px;
}
.branch {
  width: 14px;
  height: 28px;
  margin: 0 20px 0 0;
}
.crumb-caret {
  margin: 2px 0 0 21px;
  width: 16px;
}
.crumb-caret + .sep {
  margin: 0 32px;
}
.crumbs strong {
  font-weight: 600;
  color: #333;
  font-size: 30.5px;
}

/* workbench */
.workbench {
  flex: 1;
  display: flex;
  min-height: 0;
  border-left: 3px solid #e0e0e0;
}
.rail {
  width: 85px;
  flex: none;
  padding: 27px 0 0 33px;
}
.rail svg {
  width: 16px;
  height: 30px;
}
.editor {
  width: 2518px;
  flex: none;
  border-left: 3px solid #e0e0e0;
  border-right: 3px solid #e0e0e0;
  display: flex;
  flex-direction: column;
}
.toolbar {
  height: 87px;
  flex: none;
  border-bottom: 3px solid #e0e0e0;
  display: flex;
  align-items: flex-start;
  padding: 15px 39px 0 75px;
  gap: 25px;
}
.btn-group {
  display: flex;
  box-shadow: 0 5px 7px rgba(0,0,0,0.12);
}
.btn {
  height: 54px;
  padding: 0;
  border: 1.5px solid #bbb;
  border-top: 3px solid #bbb;
  border-bottom: 3px solid #bbb;
  border-left-width: 0;
  background: linear-gradient(#fafafa, #ededed);
  font-size: 28px;
  color: #333;
  display: flex;
  align-items: center;
  justify-content: center;
  gap: 12px;
}
.btn:first-child {
  border-left-width: 1.5px;
}
.btn svg {
  width: 28px;
  height: 28px;
}
.btn svg.caret {
  width: 16px;
  height: 11px;
}
.is-off {
  background: #f8f8f8;
  border-color: #ddd;
}
.w-save { width: 177px; }
.w-drop { width: 72px; }
.w-del { width: 172px; }
.w-ren { width: 179px; }
.w-copy { width: 118px; }
.w-ico { width: 61px; }
.w-play { width: 54px; }
.w-ico2 { width: 58px; }
.w-ico3 { width: 55px; }
.w-check { width: 60px; }
.w-deploy { width: 92px; }
.w-doc { width: 63px; justify-content: flex-start; padding-left: 16px; }
.w-close {
  margin-left: auto;
  width: 120px;
  justify-content: flex-end;
  padding-right: 8px;
  border-left-width: 1.5px;
  box-shadow: 0 5px 7px rgba(0,0,0,0.12);
}
.w-close svg {
  width: 20px;
  height: 20px;
}
.tabs {
  height: 91px;
  flex: none;
  display: flex;
  gap: 74px;
  padding-left: 35px;
  border-bottom: 3px solid #eee;
  font-size: 35px;
  color: #4d5258;
}
.tab {
  height: 88px;
  line-height: 88px;
}
.tab.is-active {
  color: #0088ce;
  border-bottom: 5px solid #0088ce;
}

/* canvas */
.canvas-wrap {
  flex: 1;
  min-height: 0;
  position: relative;
  display: flex;
  align-items: flex-start;
  background: #fff;
}
.palette {
  width: 109px;
  margin: 7px 0 0 -2px;
  display: flex;
  flex-direction: column;
  flex: none;
  border: 1.5px solid #ccc;
  box-shadow: 3px 3px 8px rgba(0,0,0,0.12);
  position: relative;
}
.pal-item {
  height: 107.7px;
  border-top: 3px solid #bbb;
  background: linear-gradient(#fbfbfb, #efefef);
  display: flex;
  align-items: center;
  justify-content: center;
  padding-right: 3px;
}
.pal-item svg {
  width: 56px;
  height: 56px;
}
.pal-item svg.pal-wide {
  width: 54px;
  height: 38px;
}
.diagram {
  flex: 1;
  width: 2408px;
  height: 1431px;
}
.task-label {
  font-family: 'Open Sans', sans-serif;
  font-size: 38px;
  text-anchor: middle;
  fill: #111;
}
.scroll-left {
  position: absolute;
  left: 18px;
  top: 1401px;
  width: 18px;
  height: 24px;
}

/* properties */
.props {
  width: 1126px;
  flex: none;
  display: flex;
  flex-direction: column;
}
.props-head {
  height: 89px;
  flex: none;
  border-bottom: 3px solid #e0e0e0;
  display: flex;
  align-items: center;
  justify-content: space-between;
  padding: 0 39px;
}
.props-head h2 {
  margin: 0;
  font-size: 40px;
  font-weight: 400;
  color: #363636;
}
.props-toggle {
  width: 53px;
  height: 54px;
  padding: 0;
  border: 1.5px solid #bbb;
  border-bottom: 3px solid #bbb;
  background: linear-gradient(#fafafa, #ededed);
  display: flex;
  align-items: center;
  justify-content: center;
  box-shadow: 0 5px 7px rgba(0,0,0,0.12);
}
.props-toggle svg {
  width: 14px;
  height: 28px;
}
.props-body {
  padding: 0 53px 0 52px;
}
.acc {
  display: flex;
  align-items: center;
  font-size: 36.5px;
  color: #444a50;
  line-height: 44px;
}
.chev {
  width: 12px;
  height: 22px;
  margin: 0 19px 0 4px;
}
.chev-down {
  width: 18px;
  height: 12px;
  margin: 0 15px 0 0;
}
.acc-general {
  padding: 40px 0 36px;
  border-bottom: 3px solid #ccc;
}
.acc-impl {
  padding-top: 39px;
}
.script-form {
  padding: 0 39px;
}
.form-label {
  display: block;
  margin-top: 75px;
  height: 44px;
  line-height: 44px;
  font-size: 31.5px;
  color: #4d5258;
}
.code-editor {
  margin-top: 16px;
  width: 945px;
  height: 568px;
  border: 1.5px solid #bbb;
  border-bottom: 3px solid #bbb;
  display: flex;
  flex-direction: column;
}
.code {
  height: 507px;
  flex: none;
  overflow: hidden;
  font-family: 'Liberation Mono', monospace;
  font-size: 27.4px;
  padding-left: 4px;
}
.code-line {
  line-height: 40.1px;
  white-space: pre;
}
.code-line:first-child {
  margin-top: -24px;
}
.code-line em {
  font-style: normal;
  color: #941a1a;
}
.lang-select {
  flex: 1;
  display: flex;
  align-items: center;
  justify-content: space-between;
  padding: 0 11px 0 24px;
  font-size: 31px;
  color: #4d5258;
}
.lang-select svg {
  width: 22px;
  height: 14px;
}
.check {
  display: flex;
  align-items: center;
  gap: 19px;
  font-size: 29.8px;
  color: #555;
  height: 40px;
  margin-top: 67px;
}
.check + .check {
  margin-top: 72px;
}
.check i {
  width: 30px;
  height: 30px;
  border: 3px solid #777;
  border-radius: 5px;
}
.acc-adv {
  margin-top: 80px;
  border-top: 3px solid #ccc;
  border-bottom: 3px solid #ccc;
  padding: 39px 0 35px;
}

/* right dock */
.dock {
  flex: 1;
  border-left: 2px solid #e0e0e0;
  padding: 12px 0 0 6px;
}
.dock-btn {
  width: 80px;
  height: 55px;
  padding: 0;
  border: none;
  background: #004368;
  display: flex;
  align-items: center;
  justify-content: center;
}
.dock-btn svg {
  width: 36px;
  height: 42px;
}
.dock-eye {
  width: 36px;
  height: 26px;
  margin: 29px 0 0 22px;
}

/* taskbar */
.taskbar {
  position: relative;
  z-index: 5;
  height: 120px;
  flex: none;
  margin-top: 10px;
  border-top: 3px solid #aeb8c4;
  background: linear-gradient(90deg, #cdeef9, #cde9f8 55%, #d5e1f6);
  display: flex;
  align-items: center;
}
.start {
  width: 58px;
  height: 58px;
  margin-left: 52px;
}
.search {
  width: 541px;
  height: 76px;
  margin-left: 37px;
  border-radius: 38px;
  background: #eef8fd;
  border: 2px solid #c4dfeb;
  border-bottom: 4px solid #bcd7e4;
  display: flex;
  align-items: center;
  padding-left: 27px;
  gap: 28px;
  font-size: 30px;
  color: #555;
}
.search svg {
  width: 30px;
  height: 38px;
}
.app-icon {
  height: 60px;
}
.a-folder { width: 58px; margin-left: 36px; }
.a-disc { width: 56px; margin-left: 53px; }
.a-notes { width: 44px; margin-left: 60px; }
.a-calc { width: 48px; margin-left: 64px; }
.a-paint { width: 58px; margin-left: 59px; }
.edge-wrap {
  position: relative;
  width: 60px;
  margin-left: 49px;
}
.a-edge { width: 60px; }
.edge-dot {
  position: absolute;
  left: 20px;
  top: 69px;
  width: 12px;
  height: 8px;
  border-radius: 4px;
  background: #6f7f88;
}
.task-label-text {
  font-size: 28.5px;
  color: #111;
  white-space: nowrap;
}
.t-edge {
  margin-left: 22px;
}
.task-active {
  position: relative;
  width: 360px;
  height: 96px;
  margin-left: 30px;
  background: #e5f4fc;
  border-radius: 6px;
  border-bottom: 3px solid #c4dfeb;
  display: flex;
  align-items: center;
  padding-left: 20px;
  gap: 18px;
}
.task-active svg {
  width: 60px;
  height: 62px;
}
.task-underline {
  position: absolute;
  left: 28px;
  bottom: 0;
  width: 39px;
  height: 8px;
  border-radius: 4px 4px 0 0;
  background: #1f8596;
}
.tray {
  margin-left: auto;
  display: flex;
  align-items: center;
  padding-right: 52px;
}
.t-x { width: 40px; height: 40px; margin-right: 2px; }
.t-bt { width: 28px; height: 40px; margin-left: 42px; }
.t-shield { width: 38px; height: 46px; margin-left: 50px; }
.t-lang { font-size: 27px; margin-left: 48px; color: #222; }
.t-wifi { width: 40px; height: 32px; margin-left: 49px; margin-top: -10px; }
.t-sound { width: 40px; height: 36px; margin-left: 20px; }
.t-batt { width: 42px; height: 38px; margin-left: 20px; margin-top: -8px; }
.clock {
  width: 194px;
  display: flex;
  flex-direction: column;
  align-items: flex-end;
  font-size: 29px;
  line-height: 40px;
  color: #222;
  margin-top: -2px;
}
.t-bell {
  width: 34px;
  height: 44px;
  margin-left: 22px;
}

/* heatmap overlay */
.chart {
  position: absolute;
  z-index: 3;
  left: 1440px;
  top: 222px;
  width: 1103px;
  height: 780px;
  margin: 0;
  border: 6px solid #22b14c;
  background: #fff;
  overflow: hidden;
  font-family: 'DejaVu Sans', sans-serif;
  color: #262626;
}
.chart-title {
  margin: 53px 0 0 19px;
  height: 30px;
  line-height: 30px;
  font-size: 28.7px;
  white-space: nowrap;
}
.plot {
  display: flex;
  margin-top: 9px;
  font-size: 23px;
}
.ylabels {
  width: 134px;
  flex: none;
  overflow: hidden;
  display: grid;
  grid-template-columns: 134px;
  grid-template-rows: repeat(22, 26.93px);
  height: 592.5px;
}
.ylabels span {
  display: flex;
  justify-content: flex-end;
  align-items: center;
  white-space: nowrap;
}
.ylabels span::after {
  content: '';
  flex: none;
  width: 7px;
  height: 2px;
  margin: 0 0 0 9px;
  background: #262626;
}
.heat-col {
  width: 681px;
  flex: none;
}
.heatmap {
  display: grid;
  grid-template-columns: repeat(22, 30.95px);
  grid-auto-rows: 26.93px;
}
.xlabels {
  display: grid;
  grid-template-columns: repeat(22, 30.95px);
}
.xlabels span {
  position: relative;
  height: 220px;
  padding-bottom: 20px;
  writing-mode: vertical-rl;
  transform: rotate(180deg);
  text-align: end;
  line-height: 30.95px;
  white-space: nowrap;
}
.xlabels span::before {
  content: '';
  position: absolute;
  left: 14.5px;
  bottom: 0;
  width: 2px;
  height: 9px;
  background: #262626;
}
.h0 { background: #0a0620; }
.h1 { background: #2f1739; }
.h2 { background: #581c4f; }
.h3 { background: #7f1d59; }
.h4 { background: #a6195a; }
.h5 { background: #c9184f; }
.h6 { background: #e2304a; }
.h7 { background: #ef5340; }
.h8 { background: #f48a62; }
.h9 { background: #f7b592; }
.ha { background: #f8d9c2; }
.hb { background: #faebdd; }
.cbar {
  width: 32px;
  height: 592.5px;
  margin-left: 43px;
  flex: none;
  background: linear-gradient(#faebdd, #f6b48f 14.3%, #f37651 28.6%, #e13342 42.9%, #ad1759 57.1%, #701f57 71.4%, #35193e 85.7%, #03051a);
}
.cbar-ticks {
  display: flex;
  flex-direction: column;
  margin-left: 2px;
}
.cbar-ticks span {
  height: 78.6px;
  line-height: 30px;
  margin-top: -15px;
  margin-bottom: 15px;
  display: flex;
  gap: 6px;
}
.cbar-ticks span::before {
  content: '';
  width: 7px;
  height: 2px;
  margin-top: 14px;
  background: #262626;
}

/* terminal */
.terminal {
  position: absolute;
  z-index: 2;
  left: 229px;
  top: 1043px;
  width: 2311px;
  height: 929px;
  background: #0c0c0c;
  border-radius: 14px;
  box-shadow: 0 18px 70px rgba(0,0,0,0.75);
}
.term-bar {
  height: 99px;
  background: #2e2e2e;
  border-radius: 14px 14px 0 0;
  display: flex;
  align-items: flex-end;
  padding-left: 23px;
}
.term-tab {
  width: 599px;
  height: 80px;
  background: #0c0c0c;
  border-radius: 16px 16px 0 0;
  display: flex;
  align-items: center;
  padding: 6px 44px 0 22px;
  color: #f2f2f2;
  font-size: 29.5px;
}
.term-tab svg {
  width: 38px;
  height: 32px;
}
.term-tab span {
  margin-left: 26px;
  flex: 1;
}
.term-tab .term-x {
  width: 22px;
  height: 22px;
}
.term-plus {
  width: 26px;
  height: 26px;
  margin: 0 0 27px 41px;
}
.term-sep {
  width: 1px;
  height: 60px;
  margin: 0 0 10px 29px;
  background: #4a4a4a;
}
.term-drop {
  width: 18px;
  height: 12px;
  margin: 0 0 34px 26px;
}
.term-win {
  margin: 0 0 38px auto;
  display: flex;
  gap: 91px;
  padding-right: 46px;
}
.term-win svg {
  width: 24px;
  height: 24px;
}
.term-text {
  margin: 0;
  padding: 22px 0 0 22px;
  font-family: 'Liberation Mono', monospace;
  font-size: 38.33px;
  line-height: 46px;
  color: #cccccc;
  white-space: pre;
}
.term-scroll {
  position: absolute;
  right: 16px;
  top: 820px;
  width: 4px;
  height: 59px;
  border-radius: 2px;
  background: #9a9a9a;
}

/* annotations */
.marks {
  position: absolute;
  z-index: 4;
  left: 0;
  top: 0;
  width: 3840px;
  height: 2160px;
  pointer-events: none;
}
.mark-orange {
  stroke: #ff7f27;
  stroke-width: 5;
}
.mark-green {
  stroke: #22b14c;
  stroke-width: 5;
}
```

FILE: heatmap.js
```js
// Correlation matrix, one hex digit per cell (0 = darkest, b = lightest)
const ROWS = [
  ['YEAR', 'b664672533356364645683'],
  ['BRATWURST', '6ba689020227a459843981'],
  ['CERVELAS', '6ab689020226a359743981'],
  ['CHARCUTERIE', '456b774555656456568575'],
  ['FLEISCHWAREN', '7887b92425478677878883'],
  ['GEFLUEGEL', '79979b1414369459846992'],
  ['ZUM_KOCHEN', '300421b7a874075137612a'],
  ['HACKFLEISCH', '5235447b75542433356347'],
  ['_DIVERSES', '300521a8b8830751367139'],
  ['KALB', '332553858b753864468337'],
  ['KANINCHEN', '3326437577b42653465246'],
  ['LAMM', '57657634353b7765656553'],
  ['MARINADEN', '6aa689020327b569844981'],
  ['KOCHWURST', '3434637478675b75777436'],
  ['UNFERTIGES', '75557553555557b6666565'],
  ['PFERD', '499679131536956b744972'],
  ['RIND', '6875772324468767b56763'],
  ['LAMM_STUECK', '34467475676547745b5356'],
  ['SCHINKEN', '543776667756576565b457'],
  ['SCHWEIN', '6aa589131335a459644b71'],
  ['BRAT_STUECK', '88878923234583676557b2'],
  ['FRANKFURTERLI', '311532979763165236723b']
];

const ylabels = document.getElementById('ylabels');
const xlabels = document.getElementById('xlabels');
const heatmap = document.getElementById('heatmap');

ROWS.forEach(([name, digits]) => {
  const y = document.createElement('span');
  y.textContent = name;
  ylabels.appendChild(y);

  const x = document.createElement('span');
  x.textContent = name;
  xlabels.appendChild(x);

  digits.split('').forEach(d => {
    const cell = document.createElement('div');
    cell.className = 'h' + d;
    heatmap.appendChild(cell);
  });
});
```
